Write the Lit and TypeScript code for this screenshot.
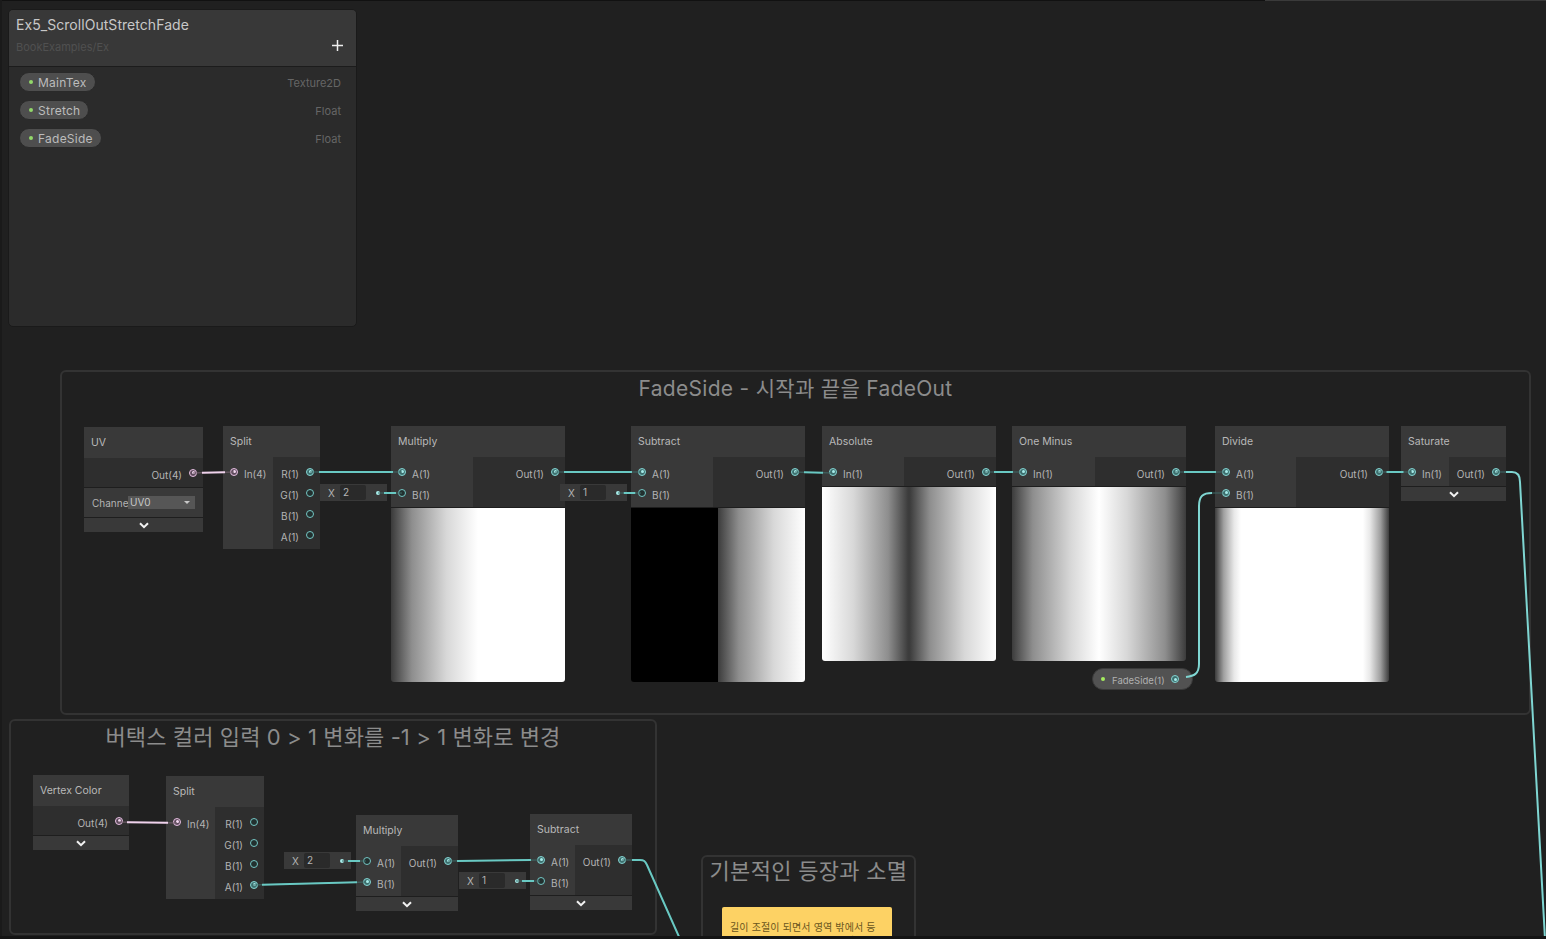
import { LitElement, html, css, svg, nothing } from 'lit';
import { customElement } from 'lit/decorators.js';
import { classMap } from 'lit/directives/class-map.js';

type PortKind = 'on' | 'off' | 'pink';
interface Port { label: string; kind: PortKind; }
interface GraphNode {
  x: number; y: number; w: number; inW: number; title: string;
  inputs: Port[]; outputs: Port[];
  preview?: string; channel?: boolean; chevron?: boolean;
}

const on = (label: string): Port => ({ label, kind: 'on' });
const off = (label: string): Port => ({ label, kind: 'off' });
const pink = (label: string): Port => ({ label, kind: 'pink' });

const NODES: GraphNode[] = [
  { x: 84, y: 427, w: 119, inW: 0, title: 'UV', inputs: [], outputs: [pink('Out(4)')], channel: true, chevron: true },
  { x: 223, y: 426, w: 97, inW: 50, title: 'Split', inputs: [pink('In(4)')], outputs: [on('R(1)'), off('G(1)'), off('B(1)'), off('A(1)')] },
  { x: 391, y: 426, w: 174, inW: 82, title: 'Multiply', inputs: [on('A(1)'), off('B(1)')], outputs: [on('Out(1)')], preview: 'ramp-up' },
  { x: 631, y: 426, w: 174, inW: 82, title: 'Subtract', inputs: [on('A(1)'), off('B(1)')], outputs: [on('Out(1)')], preview: 'ramp-half' },
  { x: 822, y: 426, w: 174, inW: 82, title: 'Absolute', inputs: [on('In(1)')], outputs: [on('Out(1)')], preview: 'ramp-abs' },
  { x: 1012, y: 426, w: 174, inW: 83, title: 'One Minus', inputs: [on('In(1)')], outputs: [on('Out(1)')], preview: 'ramp-minus' },
  { x: 1215, y: 426, w: 174, inW: 81, title: 'Divide', inputs: [on('A(1)'), on('B(1)')], outputs: [on('Out(1)')], preview: 'ramp-div' },
  { x: 1401, y: 426, w: 105, inW: 48, title: 'Saturate', inputs: [on('In(1)')], outputs: [on('Out(1)')], chevron: true },
  { x: 33, y: 775, w: 96, inW: 0, title: 'Vertex Color', inputs: [], outputs: [pink('Out(4)')], chevron: true },
  { x: 166, y: 776, w: 98, inW: 49, title: 'Split', inputs: [pink('In(4)')], outputs: [off('R(1)'), off('G(1)'), off('B(1)'), on('A(1)')] },
  { x: 356, y: 815, w: 102, inW: 45, title: 'Multiply', inputs: [off('A(1)'), on('B(1)')], outputs: [on('Out(1)')], chevron: true },
  { x: 530, y: 814, w: 102, inW: 45, title: 'Subtract', inputs: [on('A(1)'), off('B(1)')], outputs: [on('Out(1)')], chevron: true },
];

const FIELDS = [
  { x: 320, y: 484, value: '2' },
  { x: 560, y: 484, value: '1' },
  { x: 284, y: 852, value: '2' },
  { x: 459, y: 872, value: '1' },
];

// x1, y1, x2, y2, straight links between ports
const TEAL_LINKS = [
  [310, 472, 402, 472], [378, 493, 402, 493], [555, 472, 641, 472], [618, 493, 641, 493],
  [795, 472, 832, 473], [985, 472, 1022, 472], [1175, 472, 1225, 472], [1378, 472, 1412, 472],
  [342, 861, 366, 861], [253, 885, 366, 882], [448, 861, 540, 860], [516, 881, 540, 881],
];
const PINK_LINKS = [[193, 473, 234, 472], [118, 822, 177, 823]];

const PROPS = [
  { name: 'MainTex', type: 'Texture2D' },
  { name: 'Stretch', type: 'Float' },
  { name: 'FadeSide', type: 'Float' },
];

const GROUPS = [
  { x: 60, y: 370, w: 1471, h: 345, title: 'FadeSide - 시작과 끝을 FadeOut', size: '' },
  { x: 9, y: 719, w: 648, h: 216, title: '버택스 컬러 입력 0 > 1 변화를 -1 > 1 변화로 변경', size: 'wide' },
  { x: 701, y: 855, w: 215, h: 120, title: '기본적인 등장과 소멸', size: 'small' },
];

const chevron = svg`<svg width="10" height="7" viewBox="0 0 10 7"><path d="M1 1.2 5 5.2 9 1.2" fill="none" stroke="#f2f2f2" stroke-width="2"/></svg>`;

@customElement('app-root')
export class AppRoot extends LitElement {
  static styles = css`
    :host {
      display: block;
      position: relative;
      width: 1546px;
      height: 939px;
      overflow: hidden;
      background: #202020;
      font-family: Inter, "Noto Sans CJK KR", sans-serif;
      color: #c4c4c4;
    }
    .topline { height: 1px; background: #111; display: flex; justify-content: flex-end; }
    .topline i { width: 281px; background: #3a3a3a; }
    .leftline { position: absolute; left: 0; top: 0; bottom: 0; width: 2px; background: #1a1a1a; }
    .statusbar { position: absolute; left: 0; right: 0; bottom: 0; height: 3px; background: #141414; z-index: 5; }

    .blackboard {
      position: absolute; left: 8px; top: 9px; width: 349px; height: 318px;
      box-sizing: border-box;
      background: #2b2b2b; border: 1px solid #1a1a1a; border-radius: 5px; overflow: hidden;
    }
    .bb-head {
      position: relative; height: 57px; box-sizing: border-box;
      background: #383838; border-bottom: 1px solid #1c1c1c; padding: 6px 7px;
    }
    .bb-title { font-size: 14px; line-height: 18px; letter-spacing: 0.05px; color: #c8c8c8; }
    .bb-sub { font-size: 11px; line-height: 14px; margin-top: 6px; color: #505050; }
    .bb-plus { position: absolute; right: 13px; top: 30px; }
    .bb-list { padding: 5px 15px 0 10px; display: flex; flex-direction: column; gap: 8px; }
    .bb-row { display: flex; align-items: center; justify-content: space-between; height: 20px; }
    .pill {
      display: inline-flex; align-items: center; gap: 5px; height: 20px; box-sizing: border-box;
      padding: 0 8px 0 9px; border-radius: 10px; background: #4e4e4e; border: 1px solid #2a2a2a;
      font-size: 12px; letter-spacing: 0.25px; color: #bcbcbc;
    }
    .pill i { width: 4px; height: 4px; border-radius: 50%; background: #92d86a; }
    .bb-type { font-size: 11px; color: #666; position: relative; top: 1px; }

    .group {
      position: absolute; box-sizing: border-box;
      border: 2px solid #333; border-radius: 6px;
    }
    .group h3 {
      margin: 0; padding-top: 4px; text-align: center; font-weight: 400; font-size: 21px; line-height: 26px;
      letter-spacing: 0.3px; color: #8c8c8c;
    }
    .group.wide h3 { font-size: 22px; letter-spacing: 0.1px; padding-top: 3px; }
    .group.small h3 { font-size: 22px; padding-top: 1px; }

    .sticky {
      position: absolute; left: 722px; top: 907px; width: 170px; height: 80px; box-sizing: border-box;
      padding: 13px 8px; background: #fdd264; border-radius: 2px;
      font-size: 10px; line-height: 14px; letter-spacing: 0.15px; color: #6b5620;
    }

    .node { position: absolute; display: flex; flex-direction: column; background: #1e1e1e; }
    .title {
      height: 31px; flex: none; box-sizing: border-box; padding: 0 7px; display: flex; align-items: center;
      background: #393939; font-size: 10.5px; color: #b8b8b8;
    }
    .body { display: flex; background: #2e2e2e; }
    .col { display: flex; flex-direction: column; padding: 4px 0; box-sizing: border-box; }
    .col.in { flex: none; background: #393939; }
    .col.out { flex: 1; align-items: flex-end; }
    .row {
      height: 21px; display: flex; align-items: center;
      font-size: 10px; color: #b4b4b4; white-space: nowrap;
    }
    .in .row { padding-left: 7px; gap: 6px; }
    .out .row { padding-right: 6px; gap: 7px; }
    .row span:not(.port) { position: relative; top: 2px; }
    .port {
      width: 8px; height: 8px; box-sizing: border-box; flex: none; border-radius: 50%;
      border: 1px solid #74c6c4; background: #22302f;
      display: flex; align-items: center; justify-content: center;
    }
    .port.on { background: #3d6f6e; border-color: #85d4d2; }
    .port.on::after { content: ""; width: 3px; height: 3px; border-radius: 50%; background: #a8ecea; }
    .port.pink { background: #5d4a5c; border-color: #e6bfe2; }
    .port.pink::after { content: ""; width: 3px; height: 3px; border-radius: 50%; background: #f3d8f0; }

    .channel {
      height: 29px; margin-top: 1px; flex: none; box-sizing: border-box; background: #393939;
      display: flex; align-items: center; padding-left: 8px; font-size: 10px; color: #b4b4b4;
    }
    .channel label { width: 36px; overflow: hidden; white-space: nowrap; }
    .select {
      width: 67px; height: 13px; box-sizing: border-box; padding: 0 5px 0 2px; background: #565656; color: #c8c8c8;
      display: flex; align-items: center; justify-content: space-between; line-height: 13px;
    }
    .select i { width: 0; height: 0; border: 3px solid transparent; border-top: 3px solid #c8c8c8; border-bottom: 0; }
    .expand {
      height: 14px; margin-top: 1px; flex: none; background: #393939;
      display: flex; align-items: center; justify-content: center;
    }

    .preview { height: 174px; margin-top: 1px; flex: none; border-radius: 0 0 3px 3px; }
    .ramp-up { background: linear-gradient(90deg, #3a3a3a 0, #8e8e8e 12%, #d8d8d8 32%, #fff 50%, #fff 100%); }
    .ramp-half { background: linear-gradient(90deg, #000 0, #000 50%, #3c3c3c 50%, #8e8e8e 62%, #d8d8d8 82%, #fff 100%); }
    .ramp-abs { background: linear-gradient(90deg, #fff 0, #d8d8d8 18%, #8e8e8e 38%, #3c3c3c 49.5%, #3c3c3c 50.5%, #8e8e8e 62%, #d8d8d8 82%, #fff 100%); }
    .ramp-minus { background: linear-gradient(90deg, #3c3c3c 0, #8e8e8e 12%, #d8d8d8 34%, #fff 50%, #d8d8d8 66%, #8e8e8e 88%, #3c3c3c 100%); }
    .ramp-div { background: linear-gradient(90deg, #3c3c3c 0, #a0a0a0 5%, #e8e8e8 11%, #fff 15%, #fff 85%, #e8e8e8 89%, #a0a0a0 95%, #3c3c3c 100%); }

    .field {
      position: absolute; width: 67px; height: 17px; box-sizing: border-box; background: #393939;
      display: flex; align-items: center; padding-left: 8px; font-size: 10px; color: #b4b4b4;
    }
    .field b { font-weight: 400; width: 12px; }
    .field span { width: 26px; height: 15px; line-height: 15px; padding-left: 3px; box-sizing: border-box; background: #2a2a2a; border-radius: 2px; }
    .field i { width: 4px; height: 4px; margin-left: 10px; border-radius: 50%; background: #a8ecea; }

    .prop-node {
      position: absolute; left: 1092px; top: 668px; width: 101px; height: 22px; box-sizing: border-box;
      padding: 0 13px 0 8px; border-radius: 11px; background: #525252; border: 1px solid #3a3a3a;
      display: flex; align-items: center; font-size: 9.5px; color: #b0b0b0; white-space: nowrap;
    }
    .prop-node i { width: 4px; height: 4px; flex: none; border-radius: 50%; background: #a5ec5f; margin-right: 7px; }
    .prop-node span { flex: 1; position: relative; top: 1px; }

    .wires { position: absolute; left: 0; top: 0; width: 1546px; height: 939px; pointer-events: none; z-index: 3; }
    .wires path { fill: none; }
  `;

  renderPort(port: Port) {
    return html`<span class=${classMap({ port: true, on: port.kind === 'on', pink: port.kind === 'pink' })}></span>`;
  }

  renderNode(n: GraphNode) {
    return html`
      <div class="node" style="left:${n.x}px;top:${n.y}px;width:${n.w}px">
        <div class="title">${n.title}</div>
        <div class="body">
          ${n.inputs.length ? html`
            <div class="col in" style="width:${n.inW}px">
              ${n.inputs.map(p => html`<div class="row">${this.renderPort(p)}<span>${p.label}</span></div>`)}
            </div>` : nothing}
          <div class="col out">
            ${n.outputs.map(p => html`<div class="row"><span>${p.label}</span>${this.renderPort(p)}</div>`)}
          </div>
        </div>
        ${n.channel ? html`<div class="channel"><label>Channe</label><div class="select">UV0<i></i></div></div>` : nothing}
        ${n.chevron ? html`<div class="expand">${chevron}</div>` : nothing}
        ${n.preview ? html`<div class="preview ${n.preview}"></div>` : nothing}
      </div>
    `;
  }

  renderLink(l: number[], bright: string, dim: string) {
    const [x1, y1, x2, y2] = l;
    const t = Math.min(9, (x2 - x1) / 4);
    const k = (y2 - y1) / (x2 - x1);
    return svg`
      <path d="M${x1} ${y1}L${x2} ${y2}" stroke=${dim} stroke-width="1"/>
      <path d="M${x1 + t} ${y1 + k * t}L${x2 - t} ${y2 - k * t}" stroke=${bright} stroke-width="2"/>
    `;
  }

  render() {
    return html`
      <div class="topline"><i></i></div>
      <div class="leftline"></div>

      <section class="blackboard">
        <div class="bb-head">
          <div class="bb-title">Ex5_ScrollOutStretchFade</div>
          <div class="bb-sub">BookExamples/Ex</div>
          <svg class="bb-plus" width="11" height="11" viewBox="0 0 11 11"><path d="M5.5 0v11M0 5.5h11" stroke="#eee" stroke-width="1.5"/></svg>
        </div>
        <div class="bb-list">
          ${PROPS.map(p => html`
            <div class="bb-row">
              <div class="pill"><i></i>${p.name}</div>
              <div class="bb-type">${p.type}</div>
            </div>
          `)}
        </div>
      </section>

      ${GROUPS.map(g => html`
        <div class="group ${g.size}" style="left:${g.x}px;top:${g.y}px;width:${g.w}px;height:${g.h}px">
          <h3>${g.title}</h3>
        </div>
      `)}

      <div class="sticky">길이 조절이 되면서 영역 밖에서 등<br>장시 조절할 수 있도록 설정해야함</div>

      ${NODES.map(n => this.renderNode(n))}

      ${FIELDS.map(f => html`
        <div class="field" style="left:${f.x}px;top:${f.y}px"><b>X</b><span>${f.value}</span><i></i></div>
      `)}

      <div class="prop-node"><i></i><span>FadeSide(1)</span><em class="port on"></em></div>

      <svg class="wires" viewBox="0 0 1546 939">
        ${TEAL_LINKS.map(l => this.renderLink(l, '#69c9c3', '#3f6b68'))}
        ${PINK_LINKS.map(l => this.renderLink(l, '#efd2ec', '#75616f'))}
        <path d="M1186 677 C1194 676 1199 674 1199 664 L1199 506 C1199 496 1203 493 1212 493" stroke="#7fd6d2" stroke-width="2"/>
        <path d="M1212 493 H1225" stroke="#3f6b68" stroke-width="1"/>
        <path d="M1496 472 H1506" stroke="#3f6b68" stroke-width="1"/>
        <path d="M1506 472 H1512 C1517 472 1520 475 1520 482 L1545 939" stroke="#7fd6d2" stroke-width="2"/>
        <path d="M622 860 H632" stroke="#3f6b68" stroke-width="1"/>
        <path d="M632 860 H640 C644 860 645 861 647 865 L680 939" stroke="#69c9c3" stroke-width="2"/>
      </svg>

      <div class="statusbar"></div>
    `;
  }
}
